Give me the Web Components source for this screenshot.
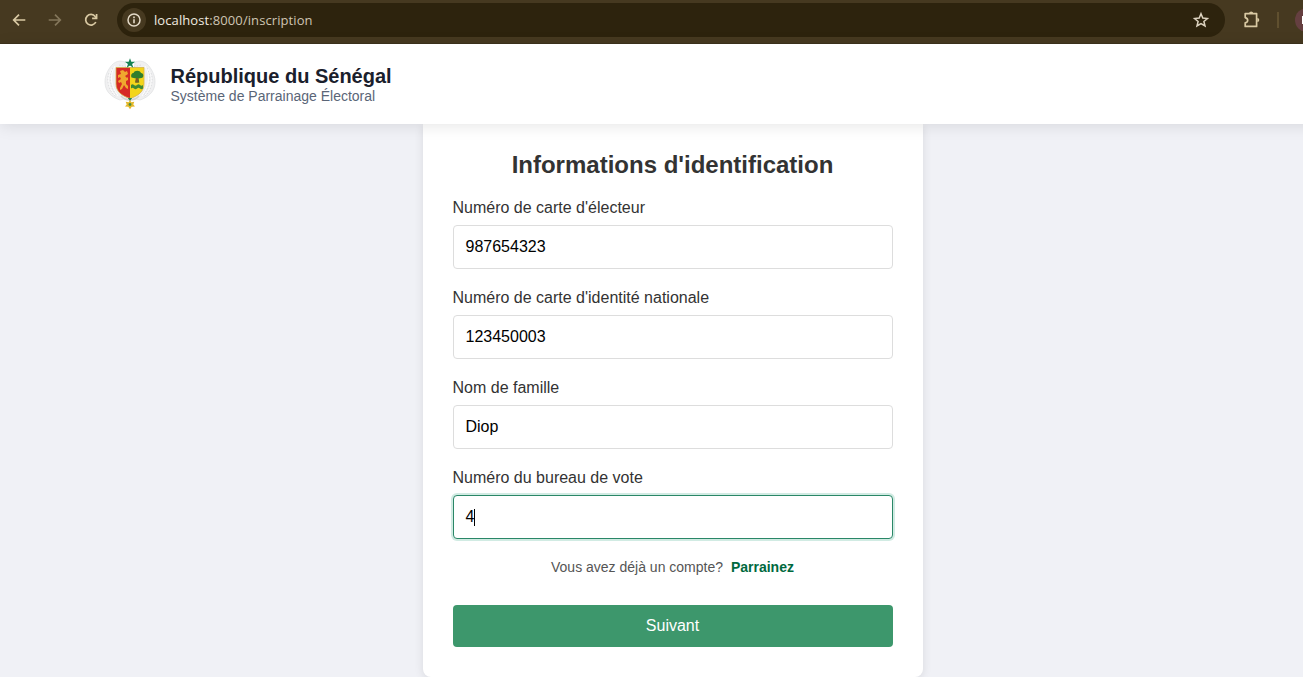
<!DOCTYPE html>
<html lang="fr">
<head>
<meta charset="utf-8">
<title>Inscription</title>
<style>
html,body{margin:0;height:100%;overflow:hidden}
body{font-family:"Liberation Sans",Arial,sans-serif;background:#f0f1f6}
</style>
</head>
<body>
<app-window></app-window>
<script>
const define=(name,html,init)=>customElements.define(name,class extends HTMLElement{
  constructor(){
    super();
    const t=document.createElement('template');
    t.innerHTML=html;
    this.attachShadow({mode:'open'}).append(t.content.cloneNode(true));
    if(init)init(this,this.shadowRoot);
  }
});

define('browser-bar',`
<style>
:host{display:flex;align-items:center;height:44px;box-sizing:border-box;padding:0 0 3px 0;background:#463920;border-bottom:1px solid #3d321c;overflow:hidden;color:#d9c9a3}
svg{display:block;flex:none}
.nav{display:flex;gap:20px;padding-left:11px;width:106px;box-sizing:border-box;flex:none}
.address{display:flex;align-items:center;width:1108px;height:34px;margin-left:11px;border-radius:17px;background:#2d230d;flex:none;box-sizing:border-box;padding:0 15px 0 5px}
.info{display:flex;align-items:center;justify-content:center;width:24px;height:24px;border-radius:50%;background:#463920}
.url{flex:1;margin-left:8px;font:13px/20px "Open Sans","Noto Sans",sans-serif;letter-spacing:.09px;color:#cfc5b3;white-space:nowrap}
.url b{font-weight:400;color:#f1ebe0}
.ext{margin-left:17px;flex:none}
.sep{width:2px;height:16px;margin-left:15px;background:#60502f;flex:none}
.avatar{width:24px;height:24px;margin-left:16px;border-radius:50%;background:#653f40;flex:none;display:flex;align-items:center}
.avatar i{width:10px;height:8px;background:#fff;margin-left:7px}
</style>
<div class="nav">
<svg width="16" height="16" viewBox="0 0 16 16" fill="none" stroke="#d9c9a3" stroke-width="1.7"><path d="M14.3 8H2.8M8 2.700 2.700 8 8 13.300"/></svg>
<svg width="16" height="16" viewBox="0 0 16 16" fill="none" stroke="#83765a" stroke-width="1.7"><path d="M1.700 8h11.500M8 2.700 13.300 8 8 13.300"/></svg>
<svg width="16" height="16" viewBox="0 0 16 16" fill="none" stroke="#d9c9a3" stroke-width="1.7"><path d="M12.800 10A5.300 5.300 0 1 1 12.200 4.500L13.200 5.700"/><path d="M13.600 1.900v4.500H9.100"/></svg>
</div>
<div class="address">
<div class="info"><svg width="14" height="14" viewBox="0 0 14 14"><circle cx="7" cy="7" r="6" fill="none" stroke="#e4dac8" stroke-width="1.5"/><path d="M6.200 6.200h1.600v4H6.200zM6.200 3.600h1.600v1.600H6.200z" fill="#e4dac8"/></svg></div>
<div class="url"><b>localhost</b>:8000/inscription</div>
<svg width="18" height="18" viewBox="0 0 18 18" fill="none" stroke="#ddd3c0" stroke-width="1.5"><path d="m9 2.800 1.800 4.300 4.600.4-3.500 3 1.100 4.500L9 12.600 5 15l1.100-4.500-3.500-3 4.600-.4z"/></svg>
</div>
<svg class="ext" width="20" height="20" viewBox="0 0 20 20"><path d="M3.200 3.600h11.400v12.800H3.200v-3.500c3.300-.5 3.300-4.500 0-5.300z" fill="none" stroke="#d9c9a3" stroke-width="1.700" stroke-linejoin="round"/><path d="M7 3.200a2.200 2.200 0 0 1 4.300 0zM15.300 8a2 2 0 0 1 0 4z" fill="#d9c9a3"/></svg>
<div class="sep"></div><div class="avatar"><i></i></div>`);

define('state-crest',`
<style>:host{display:block;width:50px;height:50px;flex:none}svg{display:block;overflow:visible}</style>
<svg width="50" height="50" viewBox="0 0 50 50">
<g fill="#f0f0f1" stroke="#dedfe1" stroke-width=".7">
<path d="M20 3C12 0 7 5 4 10C0 16-1 23 1 29c2 6 8 10 14 12l8-2z"/>
<path d="M30 3c8-3 13 2 16 7c4 6 5 13 3 19c-2 6-8 10-14 12l-8-2z"/>
</g>
<g fill="none" stroke="#fff" stroke-width="1"><path d="M7 10c-5 7-5 18 3 26M10 7C4 16 6 27 13 37M43 10c5 7 5 18-3 26M40 7c6 9 4 20-3 30"/></g>
<g fill="none" stroke="#cdced1" stroke-width=".6" stroke-dasharray="1.500 1.500"><path d="M4 14c-3 8 0 18 7 24M8 9C3 18 5 28 12 37M46 14c3 8 0 18-7 24M42 9c5 9 3 19-4 28M14 6l8 2M36 6l-8 2"/></g>
<path d="M11 8.500h14v31C17 37 11 32.500 11 25z" fill="#d62a25"/>
<path d="M25 8.500h14V25c0 7.500-6 12-14 14.500z" fill="#f3d51b"/>
<path d="M11 8.500h28V25c0 7.500-6 12-14 14.500C17 37 11 32.500 11 25z" fill="none" stroke="#d5b24b" stroke-width=".8"/>
<path d="M15 12l3-1 2 2 2-1 1 3-3 2 2 2 1-1v3l-2 1v3l2 2v3l-2-1-2-3-2 4-2 1v-2l2-4-1-2-2 1-1-2 3-2-1-2-2 1v-3l3-1z" fill="#efa72e"/>
<path d="M26.500 18.500c-1-3 .5-4.500 2-4.500 1-3 6.500-3 7.500 0 3 0 3 5 .5 5l-3 .5.8 4h-4l.7-4z" fill="#2f7e2d"/>
<path d="M31 19h2l.8 4.500h-3.600z" fill="#805b22"/>
<path d="M26 26q1.500-1.500 3 0t3 0 3 0 3 0v3.500q-1.500 1.500-3 0t-3 0-3 0-3 0z" fill="#3e8934"/>
<path d="m25-.8 1.300 3.500h3.900l-3.100 2.300 1.200 3.700-3.300-2.200-3.300 2.200L22.900 5l-3.100-2.300h3.900z" fill="#168153"/>
<path d="M16 37c3 3.500 6 4 9 4s6-.5 9-4" fill="none" stroke="#d3d4d3" stroke-width="1.500"/>
<path d="M22.800 39h4.400L25 42z" fill="#26804c"/>
<path d="m25 41 1.300 2.300 3-.5-1 2.600 1.700 2.100-3.300.3L25 50.200l-1.700-2.400-3.300-.3 1.700-2.100-1-2.600 3 .5z" fill="#e4b829"/>
<circle cx="25" cy="45.500" r="1.400" fill="#4b8c43"/>
</svg>`);

define('site-header',`
<style>
:host{display:flex;align-items:center;width:1345px;height:80px;padding-left:105px;box-sizing:border-box;background:#fff;box-shadow:0 2px 15px rgba(0,0,0,.1);position:relative;z-index:2}
.text{margin-left:15.500px}
h1{margin:0;font-size:20px;line-height:24px;color:#1a202c;font-weight:700}
p{margin:0;font-size:14px;line-height:17px;color:#5a6577}
</style>
<state-crest></state-crest><div class="text"><h1><slot name="title"></slot></h1><p><slot></slot></p></div>`);

define('form-field',`
<style>
:host{display:block;margin-bottom:20px}
label{display:block;font-size:16px;line-height:18px;color:#333;margin-bottom:8px}
.box{display:flex;align-items:center;height:44px;box-sizing:border-box;border:1px solid #ddd;border-radius:4px;padding:0 12px;font-size:16px;line-height:18px;color:#000;background:#fff}
:host([active]) .box{border-color:#2a8767;box-shadow:0 0 0 2px #d1ebe3}
.caret{display:none;width:1px;height:17px;background:#000}
:host([active]) .caret{display:block}
</style>
<label></label><div class="box"><slot></slot><span class="caret"></span></div>`,
(host,root)=>{root.querySelector('label').textContent=host.getAttribute('label')});

define('primary-button',`
<style>
:host{display:block}
button{display:block;width:100%;height:42px;border:0;border-radius:4px;background:#3d976c;color:#fff;font:16px "Liberation Sans",Arial,sans-serif;padding:0 0 1px}
</style><button type="button"><slot></slot></button>`);

define('identity-card',`
<style>
:host{display:block;width:500px;height:553px;box-sizing:border-box;padding:24px 30px 30px;background:#fff;border-radius:0 0 8px 8px;box-shadow:0 2px 10px rgba(0,0,0,.1)}
h2{margin:0 0 18px;font-size:24px;line-height:33px;text-align:center;color:#333}
.hint{margin:20px 0 30px;font-size:14px;line-height:16px;text-align:center;color:#555}
a{color:#00693e;font-weight:700;margin-left:4px}
</style>
<h2>Informations d'identification</h2>
<form-field label="Numéro de carte d'électeur">987654323</form-field>
<form-field label="Numéro de carte d'identité nationale">123450003</form-field>
<form-field label="Nom de famille">Diop</form-field>
<form-field label="Numéro du bureau de vote" active>4</form-field>
<p class="hint">Vous avez déjà un compte? <a>Parrainez</a></p>
<primary-button>Suivant</primary-button>`);

define('app-window',`
<style>
:host{display:block;width:1303px;height:677px;overflow:hidden}
main{display:flex;justify-content:center;width:1345px}
</style>
<browser-bar></browser-bar>
<site-header><span slot="title">République du Sénégal</span>Système de Parrainage Électoral</site-header>
<main><identity-card></identity-card></main>`);
</script>
</body>
</html>
